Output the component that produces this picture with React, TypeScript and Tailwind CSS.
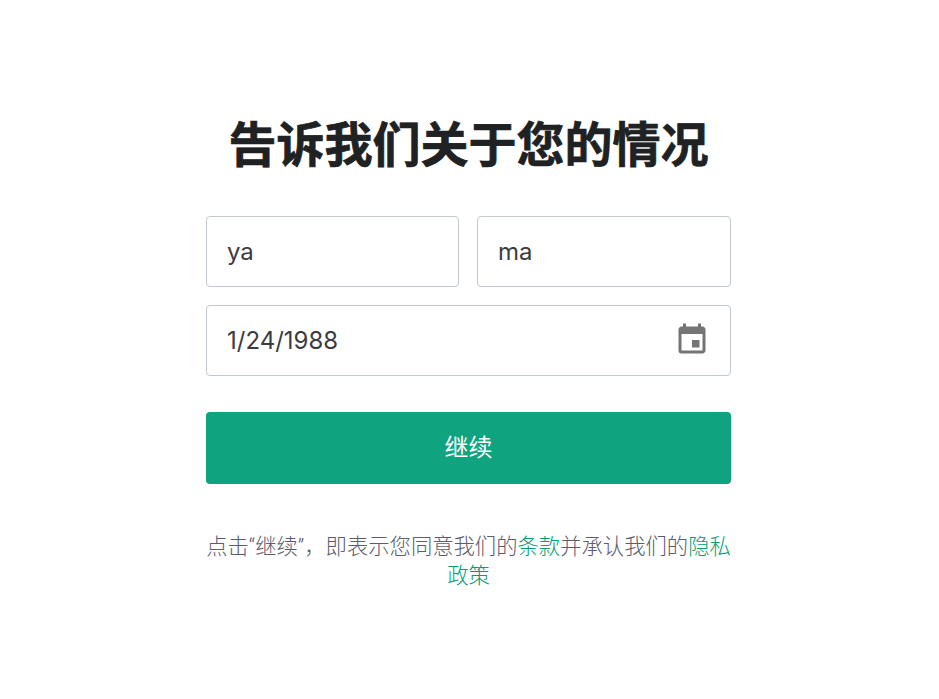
import { MdEvent } from "react-icons/md";

const FONT = "font-['Inter','Noto_Sans_CJK_SC',sans-serif]";

function Field({ value }: { value: string }) {
  return (
    <input
      readOnly
      value={value}
      className="h-[71px] w-full rounded-[4px] border border-[#c2c8d0] bg-white px-[20px] text-[24px] text-[#3c3c40] outline-none"
    />
  );
}

export default function App() {
  return (
    <div className={`${FONT} min-h-[699px] bg-white`}>
      <div className="mx-auto flex w-[525px] translate-x-[-1px] flex-col pt-[116px]">
        <h1 className="whitespace-nowrap text-center text-[48px] leading-[58px] font-bold text-[#202123] [-webkit-text-stroke:0.7px_#202123]">
          告诉我们关于您的情况
        </h1>
        <div className="mt-[42px] grid grid-cols-[253px_254px] gap-[18px]">
          <Field value="ya" />
          <Field value="ma" />
        </div>
        <div className="relative mt-[18px]">
          <Field value="1/24/1988" />
          <MdEvent className="absolute top-[17px] right-[21px] h-[36px] w-[36px] text-[#757575]" />
        </div>
        <button className="mt-[36px] h-[72px] rounded-[4px] bg-[#10a37f] text-[24px] text-white">
          继续
        </button>
        <p className="mt-[48px] text-center font-['Roboto','Noto_Sans_CJK_SC',sans-serif] text-[21.33px] leading-[29px] font-light text-[#5c5c6e]">
          点击“继续”，即表示您同意我们的<a className="text-[#0b9a76]">条款</a>并承认我们的<a className="text-[#0b9a76]">隐私政策</a>
        </p>
      </div>
    </div>
  );
}
